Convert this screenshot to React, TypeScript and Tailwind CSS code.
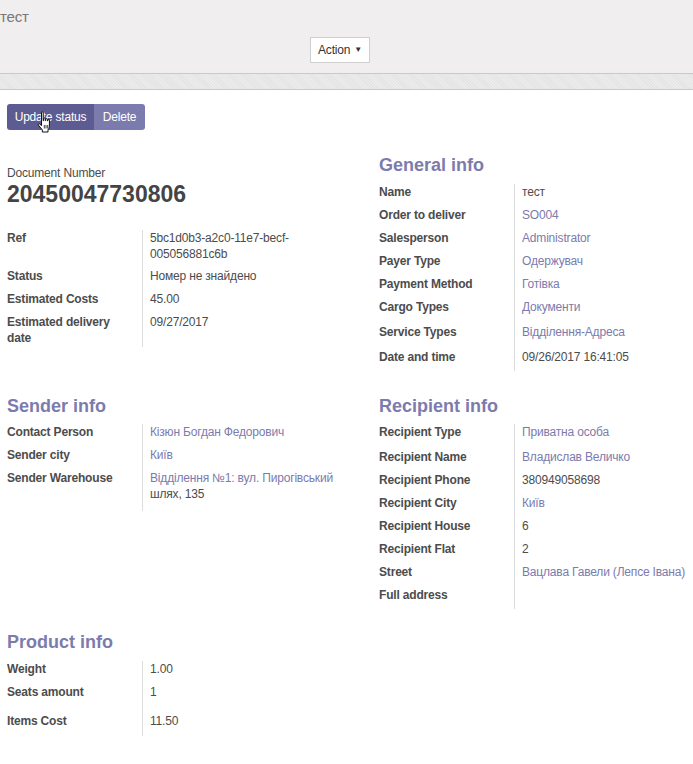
import React from "react";

type Row = {
  label: string;
  value?: React.ReactNode;
  link?: boolean;
  pb?: string;
};

const Field = ({ label, value, link, pb = "pb-[7px]" }: Row) => (
  <div className="flex">
    <div className={`w-[135px] shrink-0 pr-[10px] font-bold ${pb}`}>{label}</div>
    <div className={`flex-1 border-l border-[#dcdcdc] pl-[7px] ${pb} ${link ? "text-[#7c7bad]" : ""}`}>
      {value}
    </div>
  </div>
);

const Table = ({ rows, className = "" }: { rows: Row[]; className?: string }) => (
  <div className={className}>
    {rows.map((r) => (
      <Field key={r.label} {...r} />
    ))}
  </div>
);

const Heading = ({ children }: { children: React.ReactNode }) => (
  <h2 className="text-[18px] leading-[20px] font-bold tracking-normal text-[#7c7bad]">{children}</h2>
);

const HandCursor = () => (
  <svg
    className="absolute left-[36px] top-[111px]"
    width="18"
    height="22"
    viewBox="0 0 18 22"
  >
    <path
      d="M5.5 1.5c0-.8 1.7-.8 1.7 0v8.2h.4V7.6c0-.8 1.7-.8 1.7 0v2.1h.4V8.3c0-.8 1.7-.8 1.7 0v1.6h.4V9c0-.8 1.6-.8 1.6 0v6.3c0 1.5-.6 2.6-1.4 3.5v2.2H6.3v-2.1L2.4 14.1c-.6-.8.4-1.8 1.2-1.2l1.9 1.7z"
      fill="#fff"
      stroke="#111"
      strokeWidth="1"
      strokeLinejoin="round"
    />
    <path d="M8.3 14v3.5M10 14v3.5M11.7 14v3.5" stroke="#111" strokeWidth="0.8" />
  </svg>
);

export default function App() {
  return (
    <div className="relative w-[693px] min-h-[764px] bg-white text-[12px] leading-[16px] tracking-[-0.18px] text-[#4c4c4c] font-['Liberation_Sans',Arial,sans-serif]">
      {/* Control panel */}
      <div className="h-[74px] bg-[#f0eeee] border-b border-[#c9c9c9]">
        <div className="pt-[8px] text-[15px] leading-[18px] text-[#777]">тест</div>
        <div className="mt-[11px] ml-[310px] flex h-[26px] w-[60px] items-center justify-center gap-[4px] border border-[#cfcfcf] bg-white text-[12px] text-[#333]">
          Action
          <span className="text-[8px]">▼</span>
        </div>
      </div>
      <div className="h-[16px] bg-[#e9e9e9] border-b border-[#c9c9c9] bg-[repeating-linear-gradient(45deg,#ececec_0px,#ececec_1px,#e4e4e4_1px,#e4e4e4_2px)]" />

      {/* Status bar buttons */}
      <div className="flex pt-[14px] pl-[7px]">
        <button className="h-[26px] w-[87px] rounded-l-[3px] bg-[#5d5c92] text-[12px] text-white">
          Update status
        </button>
        <button className="h-[26px] w-[51px] rounded-r-[3px] bg-[#7c7bad] text-[12px] text-white">
          Delete
        </button>
      </div>
      <HandCursor />

      {/* Sheet */}
      <div className="px-[7px]">
        <div className="mt-[25px] flex">
          <div className="w-[350px] mr-[22px] pt-[10px]">
            <div>Document Number</div>
            <div className="text-[23px] leading-[26px] font-bold tracking-normal text-[#444]">20450047730806</div>
            <Table
              className="mt-[23px]"
              rows={[
                { label: "Ref", value: "5bc1d0b3-a2c0-11e7-becf-005056881c6b", pb: "pb-[6px]" },
                { label: "Status", value: "Номер не знайдено" },
                { label: "Estimated Costs", value: "45.00" },
                { label: "Estimated delivery date", value: "09/27/2017", pb: "pb-[1px]" },
              ]}
            />
          </div>
          <div className="flex-1">
            <Heading>General info</Heading>
            <Table
              className="mt-[9px]"
              rows={[
                { label: "Name", value: "тест" },
                { label: "Order to deliver", value: "SO004", link: true },
                { label: "Salesperson", value: "Administrator", link: true },
                { label: "Payer Type", value: "Одержувач", link: true },
                { label: "Payment Method", value: "Готівка", link: true },
                { label: "Cargo Types", value: "Документи", link: true, pb: "pb-[9px]" },
                { label: "Service Types", value: "Відділення-Адреса", link: true, pb: "pb-[9px]" },
                { label: "Date and time", value: "09/26/2017 16:41:05", pb: "pb-[6px]" },
              ]}
            />
          </div>
        </div>

        <div className="mt-[25px] flex">
          <div className="w-[350px] mr-[22px]">
            <Heading>Sender info</Heading>
            <Table
              className="mt-[8px]"
              rows={[
                { label: "Contact Person", value: "Кізюн Богдан Федорович", link: true },
                { label: "Sender city", value: "Київ", link: true },
                {
                  label: "Sender Warehouse",
                  value: (
                    <>
                      <span className="text-[#7c7bad]">Відділення №1: вул. Пирогівський</span>
                      <br />
                      шлях, 135
                    </>
                  ),
                  pb: "pb-[9px]",
                },
              ]}
            />
          </div>
          <div className="flex-1">
            <Heading>Recipient info</Heading>
            <Table
              className="mt-[8px]"
              rows={[
                { label: "Recipient Type", value: "Приватна особа", link: true, pb: "pb-[9px]" },
                { label: "Recipient Name", value: "Владислав Величко", link: true },
                { label: "Recipient Phone", value: "380949058698" },
                { label: "Recipient City", value: "Київ", link: true },
                { label: "Recipient House", value: "6" },
                { label: "Recipient Flat", value: "2" },
                {
                  label: "Street",
                  value: <span className="whitespace-nowrap">Вацлава Гавели (Лепсе Івана)</span>,
                  link: true,
                },
                { label: "Full address", value: "", pb: "pb-[6px]" },
              ]}
            />
          </div>
        </div>

        <div className="mt-[23px] w-[350px]">
          <Heading>Product info</Heading>
          <Table
            className="mt-[9px]"
            rows={[
              { label: "Weight", value: "1.00" },
              { label: "Seats amount", value: "1", pb: "pb-[13px]" },
              { label: "Items Cost", value: "11.50" },
            ]}
          />
        </div>
      </div>
    </div>
  );
}
